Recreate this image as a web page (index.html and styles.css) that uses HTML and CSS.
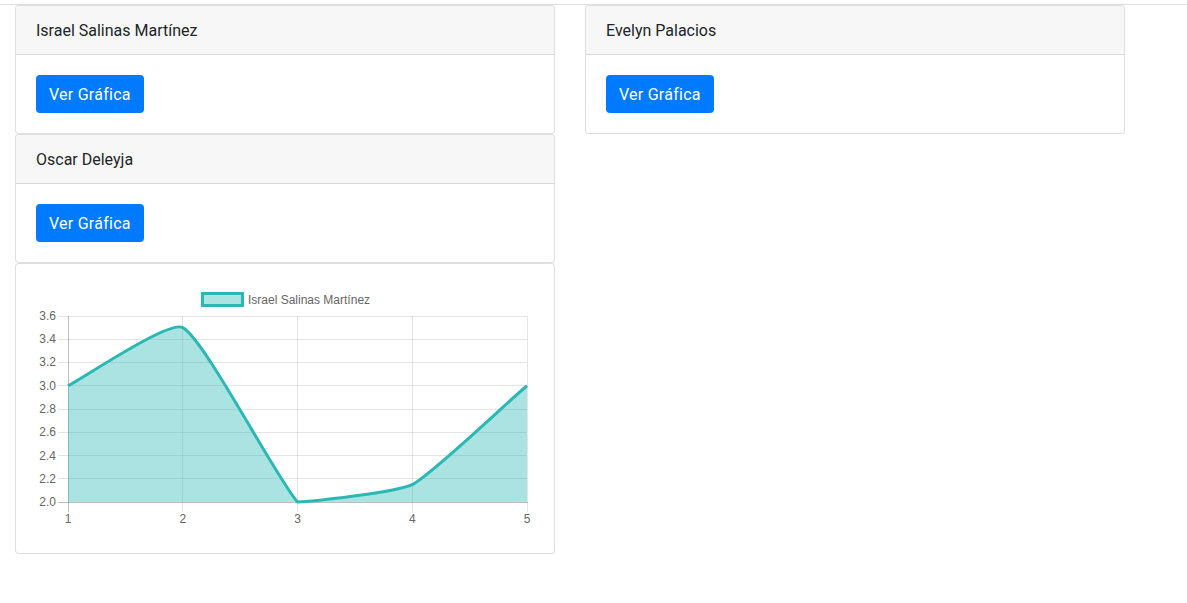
FILE: index.html
```html
<!DOCTYPE html>
<html lang="es">
<head>
<meta charset="utf-8">
<title>Gráficas</title>
<link rel="stylesheet" href="styles.css">
</head>
<body>
<div class="topbar"></div>
<div class="row">
  <div class="col">
    <div class="card">
      <div class="card-header">Israel Salinas Martínez</div>
      <div class="card-body"><button class="btn">Ver Gráfica</button></div>
    </div>
    <div class="card">
      <div class="card-header">Oscar Deleyja</div>
      <div class="card-body"><button class="btn">Ver Gráfica</button></div>
    </div>
    <div class="card">
      <div class="card-body">
        <svg class="chart" width="498" height="249" viewBox="0 0 498 249">
          <g class="grid">
            <line x1="22" y1="32.5" x2="491" y2="32.5"/>
            <line x1="22" y1="55.5" x2="491" y2="55.5"/>
            <line x1="22" y1="78.5" x2="491" y2="78.5"/>
            <line x1="22" y1="101.5" x2="491" y2="101.5"/>
            <line x1="22" y1="125.5" x2="491" y2="125.5"/>
            <line x1="22" y1="148.5" x2="491" y2="148.5"/>
            <line x1="22" y1="171.5" x2="491" y2="171.5"/>
            <line x1="22" y1="194.5" x2="491" y2="194.5"/>
            <line x1="146.5" y1="32" x2="146.5" y2="228"/>
            <line x1="261.5" y1="32" x2="261.5" y2="228"/>
            <line x1="376.5" y1="32" x2="376.5" y2="228"/>
            <line x1="491.5" y1="32" x2="491.5" y2="228"/>
          </g>
          <g class="axis">
            <line x1="32.5" y1="32" x2="32.5" y2="228"/>
            <line x1="22" y1="218.5" x2="492" y2="218.5"/>
          </g>
          <path class="area" d="M32,101.75 C49,93 133,36 146.75,43.6 C168,54.5 239,192 261.5,218 C274,218 361,208 376.25,200.6 C396,190.5 473,116.5 491,101.75 L491,218 L32,218 Z"/>
          <path class="line" d="M32,101.75 C49,93 133,36 146.75,43.6 C168,54.5 239,192 261.5,218 C274,218 361,208 376.25,200.6 C396,190.5 473,116.5 491,101.75"/>
          <g class="ylabels">
            <text x="20" y="36">3.6</text>
            <text x="20" y="59">3.4</text>
            <text x="20" y="82">3.2</text>
            <text x="20" y="106">3.0</text>
            <text x="20" y="129">2.8</text>
            <text x="20" y="152">2.6</text>
            <text x="20" y="176">2.4</text>
            <text x="20" y="199">2.2</text>
            <text x="20" y="222">2.0</text>
          </g>
          <g class="xlabels">
            <text x="32" y="239">1</text>
            <text x="146.75" y="239">2</text>
            <text x="261.5" y="239">3</text>
            <text x="376.25" y="239">4</text>
            <text x="491" y="239">5</text>
          </g>
          <rect class="legend-box" x="166.5" y="9.5" width="40" height="12"/>
          <text class="legend-text" x="212" y="20">Israel Salinas Martínez</text>
        </svg>
      </div>
    </div>
  </div>
  <div class="col">
    <div class="card">
      <div class="card-header">Evelyn Palacios</div>
      <div class="card-body"><button class="btn">Ver Gráfica</button></div>
    </div>
  </div>
</div>
</body>
</html>
```

FILE: styles.css
```css
* { box-sizing: border-box; }
html, body {
  margin: 0;
  padding: 0;
  background: #fff;
  font-family: Roboto, "Noto Sans", "Liberation Sans", sans-serif;
  font-size: 16px;
  line-height: 1.5;
  color: #212529;
}
.topbar {
  height: 5px;
  border-bottom: 1px solid #dedede;
}
.row {
  display: flex;
  align-items: flex-start;
  gap: 30px;
  padding-left: 15px;
}
.col {
  width: 540px;
  display: flex;
  flex-direction: column;
}
.card {
  border: 1px solid rgba(0,0,0,0.125);
  border-radius: 4px;
  background: #fff;
}
.card-header {
  background: #f7f7f7;
  border-bottom: 1px solid rgba(0,0,0,0.125);
  padding: 13px 20px 11px;
  height: 49px;
  border-radius: 3px 3px 0 0;
}
.card-body {
  padding: 20px;
}
.btn {
  display: block;
  height: 38px;
  font-family: inherit;
  font-size: 16px;
  line-height: 24px;
  letter-spacing: 0.25px;
  padding: 8px 13px 6px;
  color: #fff;
  background: #007bff;
  border: none;
  border-radius: 4px;
  cursor: pointer;
}
.chart {
  display: block;
}
.grid line {
  stroke: rgba(0,0,0,0.1);
  stroke-width: 1;
}
.axis line {
  stroke: rgba(0,0,0,0.25);
  stroke-width: 1;
}
.area {
  fill: rgba(43,184,180,0.4);
  stroke: none;
}
.line {
  fill: none;
  stroke: #2bb8b4;
  stroke-width: 3;
  stroke-linejoin: round;
}
.ylabels text, .xlabels text, .legend-text {
  font-family: "Liberation Sans", Arial, sans-serif;
  font-size: 12px;
  fill: #666;
}
.ylabels text { text-anchor: end; }
.xlabels text { text-anchor: middle; }
.legend-box {
  fill: rgba(43,184,180,0.4);
  stroke: #2bb8b4;
  stroke-width: 3;
}
```
